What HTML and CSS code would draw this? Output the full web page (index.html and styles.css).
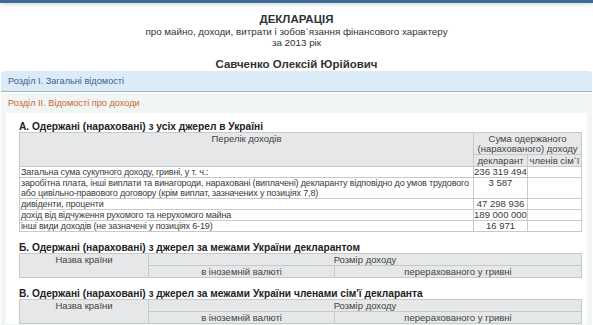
FILE: index.html
```html
<!DOCTYPE html>
<html lang="uk">
<head>
<meta charset="utf-8">
<link rel="stylesheet" href="styles.css">
</head>
<body>
<div class="topbar"></div>
<div class="head">
  <div class="title">ДЕКЛАРАЦІЯ</div>
  <div class="sub">про майно, доходи, витрати і зобов`язання фінансового характеру</div>
  <div class="sub">за 2013 рік</div>
  <div class="name">Савченко Олексій Юрійович</div>
</div>
<div class="sec1">Розділ І. Загальні відомості</div>
<div class="sec2">
  <div class="sec2-head">Розділ ІІ. Відомості про доходи</div>
  <div class="content">
    <div class="h">А. Одержані (нараховані) з усіх джерел в Україні</div>
    <table class="tbl tbl-a">
      <colgroup><col class="c1"><col class="c2"><col class="c3"></colgroup>
      <tr class="hd">
        <th rowspan="2" class="top">Перелік доходів</th>
        <th colspan="2" class="sumh">Сума одержаного<br>(нарахованого) доходу</th>
      </tr>
      <tr class="hd">
        <th>декларант</th>
        <th>членів сім`ї</th>
      </tr>
      <tr><td>Загальна сума сукупного доходу, гривні, у т. ч.:</td><td class="n">236 319 494</td><td></td></tr>
      <tr><td>заробітна плата, інші виплати та винагороди, нараховані (виплачені) декларанту відповідно до умов трудового<br>або цивільно-правового договору (крім виплат, зазначених у позиціях 7,8)</td><td class="n">3 587</td><td></td></tr>
      <tr><td>дивіденти, проценти</td><td class="n">47 298 936</td><td></td></tr>
      <tr><td>дохід від відчуження рухомого та нерухомого майна</td><td class="n">189 000 000</td><td></td></tr>
      <tr><td>інші види доходів (не зазначені у позиціях 6-19)</td><td class="n">16 971</td><td></td></tr>
    </table>

    <div class="h">Б. Одержані (нараховані) з джерел за межами України декларантом</div>
    <table class="tbl tbl-b">
      <colgroup><col class="b1"><col class="b2"><col class="b3"></colgroup>
      <tr class="hd"><th rowspan="2" class="top">Назва країни</th><th colspan="2">Розмір доходу</th></tr>
      <tr class="hd"><th>в іноземній валюті</th><th>перерахованого у гривні</th></tr>
    </table>

    <div class="h">В. Одержані (нараховані) з джерел за межами України членами сім'ї декларанта</div>
    <table class="tbl tbl-b">
      <colgroup><col class="b1"><col class="b2"><col class="b3"></colgroup>
      <tr class="hd"><th rowspan="2" class="top">Назва країни</th><th colspan="2">Розмір доходу</th></tr>
      <tr class="hd"><th>в іноземній валюті</th><th>перерахованого у гривні</th></tr>
    </table>
  </div>
</div>
</body>
</html>
```

FILE: styles.css
```css
html, body {
  margin: 0;
  padding: 0;
  background: #ffffff;
  font-family: "Liberation Sans", Arial, sans-serif;
  color: #333;
}
.topbar {
  height: 3px;
  background: #3f6a94;
  box-shadow: 0 1px 4px rgba(60, 100, 140, 0.35);
}
.head {
  text-align: center;
  padding-top: 10px;
}
.title {
  font-size: 11.5px;
  font-weight: bold;
  line-height: 13px;
  color: #333;
}
.sub {
  font-size: 9.8px;
  line-height: 11px;
  color: #333;
}
.name {
  margin-top: 10px;
  font-size: 11.5px;
  font-weight: bold;
  line-height: 12px;
  color: #333;
}
.sec1 {
  margin: 1px 1px 0;
  height: 20px;
  line-height: 20px;
  padding-left: 7px;
  background: #dcebf8;
  border-bottom: 1px solid #9db7b5;
  border-radius: 4px 4px 0 0;
  font-size: 9.2px;
  color: #3c6187;
}
.sec2 {
  margin: 1px 1px 0;
  background: #f1f5f4;
  border-radius: 4px 4px 0 0;
  padding-bottom: 20px;
}
.sec2-head {
  height: 20px;
  line-height: 20px;
  padding-left: 7px;
  font-size: 9.2px;
  color: #c9692b;
}
.content {
  margin: 0 5px;
  background: #ffffff;
  padding: 8px 0 0 13px;
}
.h {
  font-size: 10.2px;
  font-weight: bold;
  line-height: 11px;
  color: #222;
  margin-top: 10px;
}
.content > .h:first-child {
  margin-top: 0;
}
.tbl {
  border-collapse: collapse;
  width: 562px;
  table-layout: fixed;
  font-size: 9px;
  line-height: 10px;
}
.tbl th, .tbl td {
  border: 1px solid #c6cacb;
  padding: 0 1px;
  overflow: hidden;
  white-space: nowrap;
}
.tbl th {
  background: #e5e7e8;
  font-weight: normal;
  color: #444;
  font-size: 9.5px;
  line-height: 10px;
  padding-top: 1px;
  vertical-align: top;
  text-align: center;
}
.tbl td {
  color: #3a3a3a;
  vertical-align: top;
  background: #fff;
  letter-spacing: -0.15px;
}
.tbl td.n {
  text-align: center;
  font-size: 9.5px;
  letter-spacing: 0;
  padding: 0;
}
.c1 { width: 454px; }
.c2 { width: 54px; }
.c3 { width: 54px; }
.b1 { width: 129px; }
.b2 { width: 186px; }
.b3 { width: 247px; }
```
